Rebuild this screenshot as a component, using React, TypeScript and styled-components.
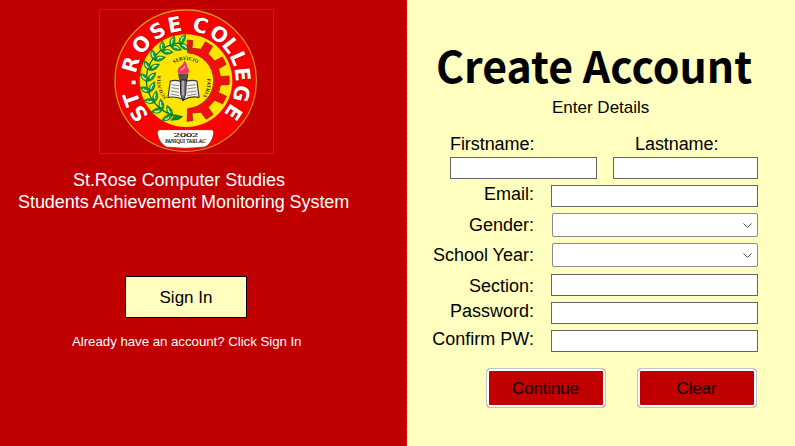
import React from "react";
import styled, { createGlobalStyle } from "styled-components";

const RED = "#c00000";
const CREAM = "#ffffc0";

const GlobalStyle = createGlobalStyle`
  *, *::before, *::after { box-sizing: border-box; }
  body { margin: 0; overflow: hidden; font-family: "Liberation Sans", Arial, sans-serif; }
`;

const Window = styled.main`
  display: flex;
  width: 795px;
  height: 446px;
  background: ${CREAM};
  color: #000;
`;

const BrandPanel = styled.section`
  flex: 0 0 407px;
  display: flex;
  flex-direction: column;
  align-items: flex-start;
  padding-top: 9px;
  background: ${RED};
  border-right: 1px dashed #e81010;
`;

const Logo = styled.svg`
  display: block;
  width: 175px;
  height: 145px;
  margin-left: 99px;
`;

const Caption = styled.p<{ $left: number; $top?: number; $size?: number }>`
  margin: ${(p) => p.$top ?? 0}px 0 0 ${(p) => p.$left}px;
  color: #fff;
  font-size: ${(p) => p.$size ?? 18}px;
  line-height: 22px;
  letter-spacing: -0.05px;
  white-space: nowrap;
`;

const SignInButton = styled.button`
  width: 122px;
  height: 42px;
  margin: 63px 0 0 125px;
  padding: 2px 0 0;
  background: ${CREAM};
  border: 1px solid #000;
  font: 17px/20px "Liberation Sans", Arial, sans-serif;
  color: #000;
`;

const FormPanel = styled.section`
  flex: 1;
  display: flex;
  flex-direction: column;
  padding: 34px 37px 0 24px;
`;

const Title = styled.h1`
  margin: 0 0 0 5px;
  font: 700 42.8px/60px "Noto Sans CJK SC", "Noto Sans", sans-serif;
  white-space: nowrap;
`;

const Subtitle = styled.p`
  margin: 4px 0 0 121px;
  font-size: 17px;
  line-height: 20px;
  white-space: nowrap;
`;

const NameRow = styled.div`
  display: flex;
  gap: 16px;
  margin: 16px 0 0 19px;
`;

const NameField = styled.label<{ $width: number; $indent?: number }>`
  display: flex;
  flex-direction: column;
  gap: 3px;
  width: ${(p) => p.$width}px;
  font-size: 18px;
  line-height: 20px;
  letter-spacing: -0.07px;
  & > span { padding-left: ${(p) => p.$indent ?? 0}px; }
`;

const TextInput = styled.input`
  display: block;
  width: 100%;
  height: 22px;
  margin: 0;
  padding: 0 3px;
  background: #fff;
  border: 1px solid #646464;
  border-radius: 0;
`;

const FieldRow = styled.div<{ $top: number }>`
  display: grid;
  grid-template-columns: 103px 207px;
  column-gap: 17px;
  align-items: start;
  height: 22px;
  margin-top: ${(p) => p.$top}px;
`;

const FieldLabel = styled.label<{ $shift: number }>`
  justify-self: end;
  margin-top: ${(p) => p.$shift}px;
  font-size: 18px;
  line-height: 20px;
  white-space: nowrap;
`;

const SelectBox = styled.div`
  display: flex;
  align-items: center;
  justify-content: flex-end;
  height: 24px;
  margin-left: 1px;
  padding: 1px 5px 0 0;
  background: #fff;
  border: 1px solid #8a8a8a;
  border-radius: 2px;
`;

const Actions = styled.div`
  display: flex;
  gap: 31px;
  margin: 16px 0 0 55px;
`;

const ActionButton = styled.button`
  width: 120px;
  height: 40px;
  padding: 2px 1px 0 0;
  background: ${RED};
  border: 1px solid #c4c4c8;
  border-radius: 4px;
  box-shadow: inset 0 0 0 2px #fff;
  font: 17px/20px "Liberation Sans", Arial, sans-serif;
  letter-spacing: -0.15px;
  color: #000;
`;

const CX = 272;
const CY = 242;

const at = (angle: number, r: number) => {
  const a = (angle * Math.PI) / 180;
  return [CX + r * Math.sin(a), CY - r * Math.cos(a)];
};

const ringLetters: [string, number][] = [
  ["S", 235], ["T", 251], [".", 268], ["R", 286.5], ["O", 309.5], ["S", 330.5], ["E", 349],
  ["C", 15], ["O", 36], ["L", 52], ["L", 67], ["E", 83.5], ["G", 103], ["E", 123.5],
];

function gearPath() {
  const inner = 84;
  const root = 109;
  const tip = 134;
  const pts: string[] = [];
  const add = (a: number, r: number) => {
    const [x, y] = at(a, r);
    pts.push(`${x.toFixed(1)} ${y.toFixed(1)}`);
  };
  add(2, tip - 12);
  add(10, tip - 12);
  add(11, root - 10);
  for (let k = 1; k <= 5; k++) {
    const a = k * 30 + (k < 3 ? 3 : k > 3 ? -3 : 0);
    add(a - 7, root - 4);
    add(a - 6, tip - 3);
    add(a + 5, tip - 3);
    add(a + 7, root - 4);
  }
  add(169, root - 10);
  add(170, tip - 12);
  add(178, tip - 12);
  const [sx, sy] = at(176, inner);
  const [ex, ey] = at(4, inner);
  return `M${pts.join("L")}L${sx} ${sy}A${inner} ${inner} 0 0 0 ${ex} ${ey}Z`;
}

const leafAngles = [202, 219, 236, 253, 270, 287, 304, 321, 337, 351];

function Leaf({ angle, side }: { angle: number; side: 1 | -1 }) {
  const [x, y] = at(angle, 112);
  return (
    <g transform={`translate(${x} ${y}) rotate(${angle + side * 46})`}>
      <path d="M-2 0Q11 -17 33 -2Q13 14 -2 0Z" fill="#12a033" stroke="#075c18" strokeWidth="1.5" />
      <path d="M10 -2Q15 -6 22 -3" fill="none" stroke="#e3f7d2" strokeWidth="4" strokeLinecap="round" />
    </g>
  );
}

function CollegeSeal() {
  return (
    <Logo viewBox="12 27 525 435" role="img" aria-label="St. Rose College">
      <rect x="13.5" y="28.5" width="522" height="432" fill="none" stroke="#ec1717" strokeWidth="3" strokeDasharray="9 3" />
      <circle cx={CX} cy={CY} r="212" fill="#fb0000" stroke="#e58a20" strokeWidth="4" />
      <circle cx={CX} cy={CY} r="208" fill="none" stroke="#be1705" strokeWidth="2" />
      <circle cx="273" cy={CY} r="139" fill="#ffe400" />
      <path d={gearPath()} fill="#f01010" stroke="#ae1d08" strokeWidth="2.5" />
      <path d="M262 350A112 112 0 0 1 155 255A112 112 0 0 1 260 128" fill="none" stroke="#086d1c" strokeWidth="4" />
      {leafAngles.map((a) => (
        <React.Fragment key={a}>
          <Leaf angle={a} side={1} />
          <Leaf angle={a} side={-1} />
        </React.Fragment>
      ))}
      <path d="M240 343L264 350L250 360L226 362Z" fill="#0d8526" />
      {ringLetters.map(([ch, a], i) => {
        const [x, y] = at(a, 150);
        return (
          <text key={i} transform={`translate(${x} ${y}) rotate(${a}) scale(0.98 1)`} textAnchor="middle" fontFamily="DejaVu Sans" fontWeight="700" fontSize="62" fill="#fff" stroke="#970000" strokeWidth="2" paintOrder="stroke">
            {ch}
          </text>
        );
      })}
      <defs>
        <path id="motto-top" d="M210 242A61 61 0 0 1 334 242" />
        <path id="motto-left" d="M222 300A78 78 0 0 1 200 218" />
        <path id="motto-right" d="M332 222A72 72 0 0 1 314 300" />
      </defs>
      <g fontFamily="Liberation Serif" fontWeight="700" fill="#221b00" textAnchor="middle">
        <text fontSize="15"><textPath href="#motto-top" startOffset="50%">SERVICIO</textPath></text>
        <text fontSize="14.5"><textPath href="#motto-left" startOffset="50%">SCIENTIA</textPath></text>
        <text fontSize="15"><textPath href="#motto-right" startOffset="50%">PATRIA</textPath></text>
      </g>
      <path d="M226 243Q246 237 265 248Q284 237 306 243L312 292Q287 287 266 299Q246 288 219 292Z" fill="#f4f3e7" stroke="#383838" strokeWidth="3.5" />
      <path d="M230 254L252 257M229 263L252 267M228 273L252 277M227 282L252 287M277 257L302 254M277 267L303 263M277 277L304 273M277 287L305 282" stroke="#8a8a8a" strokeWidth="3" />
      <path d="M251 224H279L275 241H255Z" fill="#55555c" stroke="#151515" strokeWidth="2" />
      <path d="M256 240H274L272 283L264 303L257 283Z" fill="#777" stroke="#222" strokeWidth="3" />
      <path d="M264 242V286" stroke="#ddd" strokeWidth="3" />
      <path d="M251 221Q244 208 258 198Q267 192 268 182Q277 195 276 201Q287 213 278 221Z" fill="#ef3b67" stroke="#c92350" strokeWidth="1" />
      <path d="M257 211Q266 208 270 198" fill="none" stroke="#ff9bae" strokeWidth="5" />
      <path d="M194 389H350Q358 391 356 402Q351 430 330 441Q272 449 214 441Q193 430 187 402Q185 391 194 389Z" fill="#fff" stroke="#8a1616" strokeWidth="2" />
      <g fontFamily="Liberation Serif" fill="#111" textAnchor="middle">
        <text x="273" y="412" fontSize="21" textLength="73" lengthAdjust="spacingAndGlyphs" stroke="#111" strokeWidth="0.6">2002</text>
        <text x="271" y="430" fontSize="18" textLength="121" lengthAdjust="spacingAndGlyphs" stroke="#111" strokeWidth="0.6">PANIQUI TARLAC</text>
      </g>
    </Logo>
  );
}

const Chevron = () => (
  <svg width="9" height="6" viewBox="0 0 9 6" fill="none">
    <path d="M0.5 0.5L4.5 4.5L8.5 0.5" stroke="#505050" strokeWidth="1" />
  </svg>
);

const fields = [
  { label: "Email:", top: 6, shift: -1 },
  { label: "Gender:", top: 6, shift: 2, select: true },
  { label: "School Year:", top: 8, shift: 2, select: true },
  { label: "Section:", top: 9, shift: 2 },
  { label: "Password:", top: 6, shift: -1 },
  { label: "Confirm PW:", top: 6, shift: -1 },
];

export default function App() {
  return (
    <>
      <GlobalStyle />
      <Window>
        <BrandPanel>
          <CollegeSeal />
          <Caption $left={73} $top={15}>St.Rose Computer Studies</Caption>
          <Caption $left={18}>Students Achievement Monitoring System</Caption>
          <SignInButton>Sign In</SignInButton>
          <Caption $left={72} $top={13} $size={13.3}>Already have an account? Click Sign In</Caption>
        </BrandPanel>
        <FormPanel>
          <Title>Create Account</Title>
          <Subtitle>Enter Details</Subtitle>
          <NameRow>
            <NameField $width={147}><span>Firstname:</span><TextInput /></NameField>
            <NameField $width={145} $indent={22}><span>Lastname:</span><TextInput /></NameField>
          </NameRow>
          {fields.map((f) => (
            <FieldRow key={f.label} $top={f.top}>
              <FieldLabel $shift={f.shift}>{f.label}</FieldLabel>
              {f.select ? <SelectBox><Chevron /></SelectBox> : <TextInput />}
            </FieldRow>
          ))}
          <Actions>
            <ActionButton>Continue</ActionButton>
            <ActionButton>Clear</ActionButton>
          </Actions>
        </FormPanel>
      </Window>
    </>
  );
}
